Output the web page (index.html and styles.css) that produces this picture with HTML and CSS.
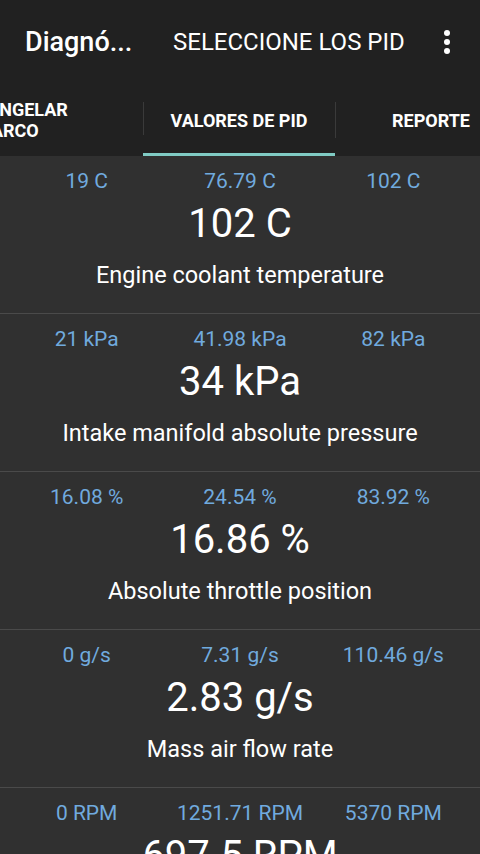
FILE: index.html
```html
<!DOCTYPE html>
<html lang="es">
    <head>
        <meta charset="UTF-8">
        <meta name="viewport" content="width=device-width, initial-scale=1.0">
        <title>Diagnóstico</title>
        <link rel="stylesheet" href="styles.css">
    </head>
    <body>
        <header class="appbar">
            <div class="toolbar">
                <h1 class="title">Diagnó...</h1>
                <span class="action">SELECCIONE LOS PID</span>
                <svg class="overflow" width="24" height="28" viewBox="0 0 24 28">
                    <circle cx="12" cy="5" r="3" fill="#fff"/>
                    <circle cx="12" cy="14" r="3" fill="#fff"/>
                    <circle cx="12" cy="23" r="3" fill="#fff"/>
                </svg>
            </div>
            <nav class="tabs">
                <div class="tab tab-first">CONGELAR<br>MARCO</div>
                <div class="tab active">VALORES DE PID</div>
                <div class="tab">REPORTE</div>
            </nav>
        </header>
        <main class="pid-list">
            <section class="pid">
                <div class="stats"><span>19 C</span><span>76.79 C</span><span>102 C</span></div>
                <div class="value">102 C</div>
                <div class="name">Engine coolant temperature</div>
            </section>
            <section class="pid">
                <div class="stats"><span>21 kPa</span><span>41.98 kPa</span><span>82 kPa</span></div>
                <div class="value">34 kPa</div>
                <div class="name">Intake manifold absolute pressure</div>
            </section>
            <section class="pid">
                <div class="stats"><span>16.08 %</span><span>24.54 %</span><span>83.92 %</span></div>
                <div class="value">16.86 %</div>
                <div class="name">Absolute throttle position</div>
            </section>
            <section class="pid">
                <div class="stats"><span>0 g/s</span><span>7.31 g/s</span><span>110.46 g/s</span></div>
                <div class="value">2.83 g/s</div>
                <div class="name">Mass air flow rate</div>
            </section>
            <section class="pid">
                <div class="stats"><span>0 RPM</span><span>1251.71 RPM</span><span>5370 RPM</span></div>
                <div class="value">697.5 RPM</div>
                <div class="name">Engine RPM</div>
            </section>
        </main>
    </body>
</html>
```

FILE: styles.css
```css
body {
    margin: 0;
    width: 480px;
    height: 854px;
    overflow: hidden;
    font-family: Roboto, "Noto Sans", sans-serif;
    background-color: #303030;
    color: #fff;
}
.appbar {
    background-color: #212121;
}
.toolbar {
    display: flex;
    align-items: center;
    height: 84px;
    padding: 0 21px 0 25px;
}
.title {
    margin: 0;
    font-size: 27px;
    font-weight: 500;
    width: 148px;
    white-space: nowrap;
}
.action {
    flex: 1;
    font-size: 24px;
    white-space: nowrap;
}
.overflow {
    display: block;
}
.tabs {
    display: flex;
    height: 72px;
    margin-left: -49px;
}
.tab {
    flex: 0 0 192px;
    display: flex;
    align-items: center;
    justify-content: center;
    text-align: center;
    font-size: 18px;
    font-weight: 700;
    line-height: 21px;
    position: relative;
    box-sizing: border-box;
}
.tab + .tab::before {
    content: "";
    position: absolute;
    left: 0;
    top: 18px;
    bottom: 18px;
    width: 1px;
    background-color: #3a3a3a;
}
.tab-first {
    justify-content: flex-start;
    text-align: left;
    padding-left: 24px;
}
.active {
    border-bottom: 3px solid #80cbc4;
    padding-top: 3px;
}
.pid {
    height: 158px;
    padding: 12px 10px 0;
    box-sizing: border-box;
    border-bottom: 1px solid #4a4a4a;
    text-align: center;
}
.stats {
    display: grid;
    grid-template-columns: 1fr 1fr 1fr;
    height: 26px;
    line-height: 26px;
    font-size: 21px;
    color: #70aade;
    white-space: nowrap;
}
.value {
    margin-top: 6px;
    font-size: 40px;
    line-height: 48px;
}
.name {
    margin-top: 13px;
    font-size: 23.5px;
    line-height: 28px;
}
```
